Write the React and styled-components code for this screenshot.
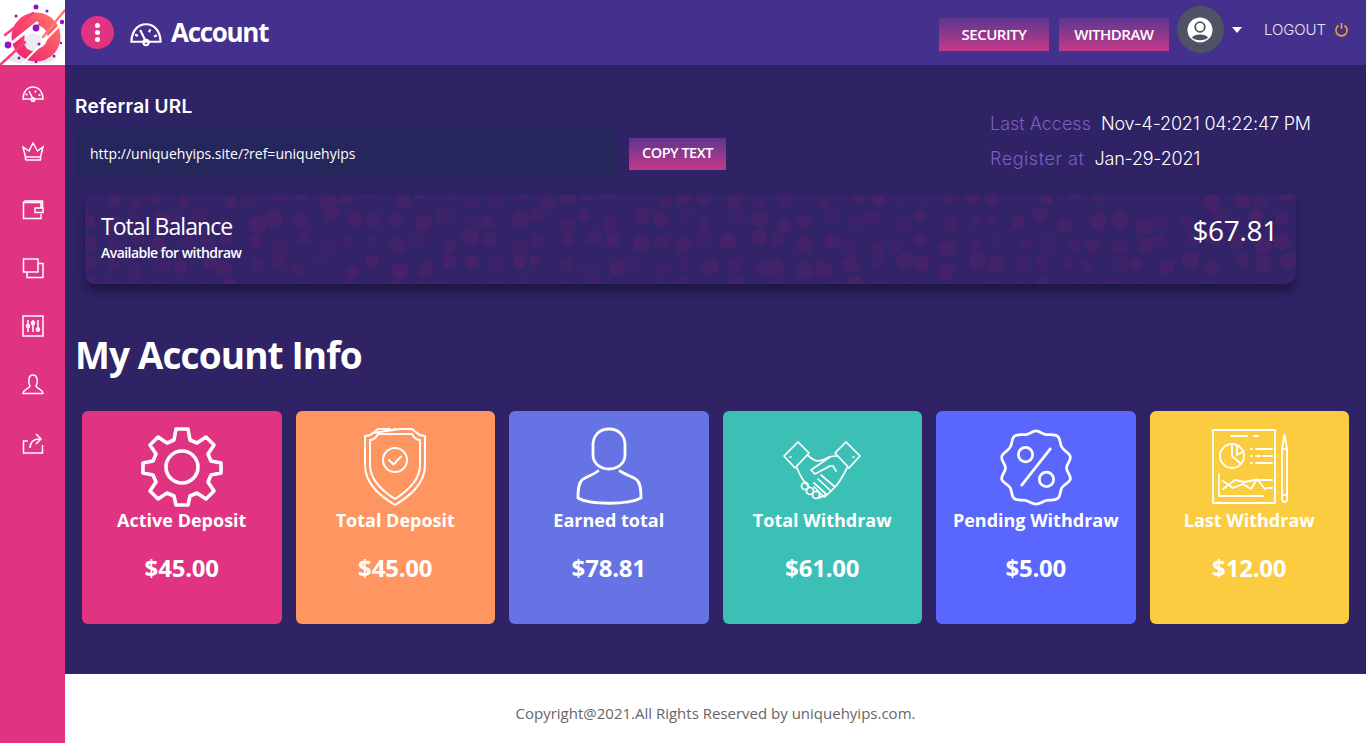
import React from 'react';
import styled, { createGlobalStyle } from 'styled-components';

const GlobalStyle = createGlobalStyle`
  html, body { margin: 0; padding: 0; background: #2f2366; }
  * { box-sizing: border-box; }
`;

const Page = styled.div`
  display: flex;
  width: 1366px;
  height: 743px;
  overflow: hidden;
  font-family: "Open Sans", sans-serif;
`;

const Sidebar = styled.aside`
  flex: 0 0 65px;
  display: flex;
  flex-direction: column;
  background: #e03382;
`;

const LogoBox = styled.div`
  height: 65px;
  background: #fff;
`;

const SideNav = styled.nav`
  display: flex;
  flex-direction: column;
  align-items: center;
  padding-top: 17px;
  gap: 36.3px;
`;

const SideIcon = styled.svg`
  width: 22px;
  height: 22px;
  fill: none;
  stroke: #fff;
  stroke-width: 1.5;
  display: block;
`;

const Content = styled.div`
  flex: 1;
  display: flex;
  flex-direction: column;
  min-width: 0;
`;

const Header = styled.header`
  height: 65px;
  display: flex;
  align-items: center;
  padding: 0 16px;
  background: #44318d;
`;

const MenuButton = styled.div`
  width: 33px;
  height: 33px;
  border-radius: 50%;
  background: #e03382;
  display: flex;
  flex-direction: column;
  align-items: center;
  justify-content: center;
  gap: 2px;
  margin-right: 16px;
  span {
    width: 5px;
    height: 5px;
    border-radius: 50%;
    background: #fff;
  }
`;

const PageTitle = styled.h1`
  margin: -2px 0 0 9px;
  color: #fff;
  font-size: 26px;
  font-weight: 700;
  letter-spacing: -1.3px;
`;

const HeaderRight = styled.div`
  margin-left: auto;
  display: flex;
  align-items: center;
`;

const GradientButton = styled.button`
  border: 0;
  padding: 0 0 ${(p) => p.$pb || 1}px;
  width: ${(p) => p.$w}px;
  height: ${(p) => p.$h}px;
  margin-left: ${(p) => p.$ml || 0}px;
  margin-top: ${(p) => p.$mt || 0}px;
  background: linear-gradient(180deg, #5f3590 0%, #c43a88 100%);
  color: #fff;
  font-family: "Open Sans", sans-serif;
  font-size: ${(p) => p.$size || 15}px;
  font-weight: 600;
  letter-spacing: -0.5px;
`;

const Avatar = styled.div`
  width: 47px;
  height: 47px;
  margin-left: 8px;
  margin-top: -6px;
  border-radius: 50%;
  background: #4f5262;
  display: flex;
  align-items: center;
  justify-content: center;
`;

const Caret = styled.div`
  width: 0;
  height: 0;
  margin: -6px 0 0 8px;
  border-left: 5.5px solid transparent;
  border-right: 5.5px solid transparent;
  border-top: 6px solid #fff;
`;

const Logout = styled.div`
  display: flex;
  align-items: center;
  margin: -7px 1px 0 22px;
  color: #e9e6f5;
  font-family: "Inter", sans-serif;
  font-size: 15px;
  font-weight: 300;
  letter-spacing: -0.08px;
  svg { margin-left: 8px; }
`;

const Main = styled.main`
  flex: 1;
  background: #2f2366;
  padding: 29px 17px 0 10px;
`;

const TopRow = styled.div`
  display: flex;
  justify-content: space-between;
`;

const ReferralLabel = styled.div`
  color: #fff;
  font-family: "Inter", sans-serif;
  font-size: 19px;
  font-weight: 600;
  line-height: 26px;
  height: 35px;
  letter-spacing: 0.25px;
`;

const ReferralRow = styled.div`
  display: flex;
  align-items: center;
`;

const UrlBox = styled.div`
  width: 543px;
  height: 48px;
  display: flex;
  align-items: center;
  padding-left: 15px;
  background: #25265c;
  color: #fff;
  font-size: 14px;
`;

const AccessList = styled.div`
  width: 359px;
  padding-top: 16px;
  display: flex;
  flex-direction: column;
  gap: 7px;
`;

const AccessLine = styled.div`
  display: flex;
  height: 28px;
  line-height: 28px;
  font-family: "Inter", sans-serif;
  font-size: 18px;
  font-weight: 300;
`;

const AccessKey = styled.span`
  color: #7a5fc4;
  margin-right: 10px;
  letter-spacing: ${(p) => p.$track || 0}px;
`;

const AccessValue = styled.span`
  color: #fff;
  letter-spacing: -0.2px;
`;

const Balance = styled.section`
  position: relative;
  overflow: hidden;
  width: 1211px;
  height: 89px;
  margin: 18px 0 0 10px;
  padding: 17px 18px 0 16px;
  display: flex;
  justify-content: space-between;
  background: #33246a;
  border-radius: 0 0 10px 10px;
  box-shadow: 0 8px 8px rgba(28, 21, 62, 0.85);
`;

const DotField = styled.svg`
  position: absolute;
  inset: 0;
  width: 100%;
  height: 100%;
`;

const BalanceText = styled.div`
  position: relative;
  color: #fff;
`;

const BalanceTitle = styled.div`
  font-size: 23px;
  line-height: 28px;
  letter-spacing: -0.95px;
`;

const BalanceSub = styled.div`
  font-size: 14px;
  line-height: 20px;
  margin-top: 3px;
  font-weight: 600;
  letter-spacing: -0.55px;
`;

const BalanceAmount = styled.div`
  position: relative;
  color: #fff;
  font-size: 28px;
  line-height: 36px;
  letter-spacing: -0.3px;
`;

const SectionTitle = styled.h2`
  margin: 42px 0 0;
  height: 85px;
  color: #fff;
  font-size: 37px;
  line-height: 58px;
  font-weight: 700;
  letter-spacing: -0.9px;
`;

const CardGrid = styled.div`
  display: grid;
  grid-template-columns: repeat(6, 1fr);
  gap: 14px;
  margin-left: 7px;
`;

const Card = styled.div`
  height: 213px;
  display: flex;
  flex-direction: column;
  align-items: center;
  padding-top: 16px;
  border-radius: 6px;
  background: ${(p) => p.$bg};
  color: #fff;
`;

const CardIcon = styled.svg`
  width: 82px;
  height: 80px;
  fill: none;
  stroke: #fff;
  stroke-width: ${(p) => p.$sw || 2.6};
  stroke-linecap: round;
  stroke-linejoin: round;
`;

const CardLabel = styled.div`
  font-size: 18px;
  line-height: 26px;
  font-weight: 700;
`;

const CardValue = styled.div`
  margin-top: 18px;
  font-size: 24px;
  line-height: 34px;
  font-weight: 700;
  letter-spacing: -0.2px;
`;

const Footer = styled.footer`
  height: 69px;
  display: flex;
  align-items: center;
  justify-content: center;
  padding-top: 8px;
  background: #fff;
  color: #666;
  font-size: 15px;
`;

const Logo = () => (
  <svg width="65" height="65" viewBox="0 0 65 65">
    <defs>
      <linearGradient id="ring" x1="0" y1="1" x2="1" y2="0">
        <stop offset="0" stopColor="#f0246f" />
        <stop offset="1" stopColor="#ff6f6a" />
      </linearGradient>
    </defs>
    <ellipse cx="32" cy="58" rx="24" ry="6" fill="#e8e8ee" />
    <circle cx="36" cy="37" r="18" fill="none" stroke="url(#ring)" strokeWidth="13" />
    <circle cx="33" cy="42" r="9" fill="#ebebf0" />
    <g stroke="#fff" strokeLinecap="round">
      <path d="M13 42 L37 23" strokeWidth="3" />
      <path d="M23 63 L65 20" strokeWidth="2" />
    </g>
    <g strokeLinecap="round" strokeWidth="2.5">
      <path d="M5 35 L33 13" stroke="#fb3d7b" />
      <path d="M0 65 L25 42" stroke="#fb3d7b" />
      <path d="M43 37 L65 10" stroke="#ff7a6c" />
    </g>
    <g fill="#8f14c4">
      <circle cx="36" cy="7" r="2.5" />
      <circle cx="47" cy="11" r="1.5" />
      <circle cx="16" cy="16" r="1.5" />
      <circle cx="62" cy="22" r="2.2" />
      <circle cx="36" cy="28" r="3.4" />
      <circle cx="8" cy="45" r="3.4" />
      <circle cx="39" cy="44" r="1.5" />
      <circle cx="19" cy="58" r="1.5" />
      <circle cx="61" cy="43" r="1.2" />
      <circle cx="54" cy="56" r="1.5" />
      <circle cx="36" cy="62" r="1.3" />
    </g>
  </svg>
);

const Gauge = ({ size = 22 }) => (
  <SideIcon viewBox="0 0 22 22" style={{ width: size, height: size }}>
    <path d="M1 17 C1 10 5 5 11 5 C17 5 21 10 21 17 Z" />
    <path d="M7 9 L10.5 16" />
    <circle cx="11" cy="17.5" r="1.8" />
    <path d="M3.5 12 L5.5 13 M14 8.5 L13 10.5 M18.5 12.5 L16.5 13.5" />
  </SideIcon>
);

const Crown = () => (
  <SideIcon viewBox="0 0 22 22">
    <path d="M3.5 20 H19 M3.5 17 H18.5 V20 M3.5 17 V20 M3.5 17 L1 7 L7 11 L11 3 L15.5 11 L21 7 L18.5 17" />
  </SideIcon>
);

const Wallet = () => (
  <SideIcon viewBox="0 0 22 22">
    <path d="M19 9 V3.5 H1.5 V19.5 H19 V15" />
    <path d="M1.5 3.5 L3 2 H20.5 V9" />
    <path d="M13 9 H21 V13.5 H13 Z" />
  </SideIcon>
);

const Screens = () => (
  <SideIcon viewBox="0 0 22 22">
    <path d="M1.5 2 H16 V15 H1.5 Z" />
    <path d="M16 6.5 H21 V20.5 H5 V15" />
  </SideIcon>
);

const Sliders = () => (
  <SideIcon viewBox="0 0 22 22">
    <path d="M1 1 H21 V21 H1 Z" />
    <path d="M6 5 V17 M11 5 V17 M16 5 V17" />
    <circle cx="6" cy="11" r="1.6" />
    <circle cx="11" cy="8" r="1.6" />
    <circle cx="16" cy="14.5" r="1.6" />
  </SideIcon>
);

const Person = () => (
  <SideIcon viewBox="0 0 22 22">
    <path d="M8 13 C6 10 6 2 11 2 C16 2 16 10 14 13 C14 15 21 17 21 20.5 H1 C1 17 8 15 8 13 Z" />
  </SideIcon>
);

const Share = () => (
  <SideIcon viewBox="0 0 22 22">
    <path d="M6 9 H1.5 V21 H20.5 V13" />
    <path d="M8 16 C8 10 11 7 18 7 M14 2 L19 7 L14 12" />
  </SideIcon>
);

const UserBadge = () => (
  <svg width="26" height="26" viewBox="0 0 26 26">
    <circle cx="13" cy="13" r="12.5" fill="#fff" />
    <circle cx="13" cy="10" r="4.8" fill="none" stroke="#4f5262" strokeWidth="1.8" />
    <path d="M5 20.5 C7 16.5 19 16.5 21 20.5 C18 24 8 24 5 20.5 Z" fill="#4f5262" />
  </svg>
);

const PowerIcon = () => (
  <svg width="15" height="15" viewBox="0 0 15 15" fill="none" stroke="#e3a72f" strokeWidth="1.6">
    <path d="M4.5 3.5 A5.6 5.6 0 1 0 10.5 3.5" />
    <path d="M7.5 1 V7" />
  </svg>
);

// fixed pseudo random, the dots are only a texture
const dots = [];
let seed = 7;
const rnd = () => {
  seed = (seed * 16807) % 2147483647;
  return seed / 2147483647;
};
for (let x = -6; x < 1215; x += 24) {
  for (let y = -4; y < 95; y += 23) {
    dots.push({
      x: x + rnd() * 12,
      y: y + rnd() * 12,
      r: 6 + rnd() * 3,
      o: 0.35 + rnd() * 0.5,
    });
  }
}

const Gear = () => (
  <CardIcon viewBox="0 0 82 80" $sw={3.6}>
    <path d="M35 2 H47 L49 13 L56 16 L65 10 L73 18 L67 27 L70 34 L80 36 V46 L70 48 L67 55 L73 64 L65 72 L56 66 L49 69 L47 78 H35 L33 69 L26 66 L17 72 L9 64 L15 55 L12 48 L2 46 V36 L12 34 L15 27 L9 18 L17 10 L26 16 L33 13 Z" />
    <circle cx="41" cy="40" r="16" />
  </CardIcon>
);

const Shield = () => (
  <CardIcon viewBox="0 0 82 80" $sw={2}>
    <path d="M19 6 L24 2 H36 M46 2 H58 L63 6 C66 9 69 9 71 9 V38 C71 58 54 70 41 78 C28 70 11 58 11 38 V9 C13 9 16 9 19 6 Z" />
    <path d="M24 7 H36 M46 7 H58 C60 11 63 13 66 13 V38 C66 54 52 65 41 72 C30 65 16 54 16 38 V13 C19 13 22 11 24 7 Z" />
    <circle cx="41" cy="33" r="12" />
    <path d="M35 33 L39.5 37.5 L47 29.5" />
    <path d="M40 2 H42" />
  </CardIcon>
);

const Bust = () => (
  <CardIcon viewBox="0 0 82 80" $sw={2.8}>
    <path d="M41 2 C31 2 25 9 25 18 V28 C25 36 32 42 41 42 C50 42 57 36 57 28 V18 C57 9 51 2 41 2 Z" />
    <path d="M30 44 C25 48 17 50 14 53 C11 56 10 60 10 71 C22 78 60 78 73 71 C73 60 72 56 69 53 C66 50 58 48 52 44" />
  </CardIcon>
);

const Handshake = () => (
  <CardIcon viewBox="0 -11 82 80" $sw={1.7}>
    <path d="M3 18 L17 4 L28 15 L14 30 Z" />
    <path d="M54 15 L65 4 L79 18 L68 30 Z" />
    <path d="M9 19 H10 M72 19 H73" />
    <path d="M26 17 L33 22 C38 24 42 22 48 19 C51 18 53 18 56 18" />
    <path d="M16 30 C19 38 23 44 28 49" />
    <path d="M66 30 C62 38 58 45 54 49 L47 56 L43 59 L33 49" />
    <path d="M49 19 L30 32 L34 36 L49 28 H52 L55 33" />
    <path d="M40 37 L54 49 M37 41 L50 53 M33 45 L45 56" />
    <circle cx="24" cy="48" r="3.5" />
    <circle cx="29" cy="53" r="3.5" />
    <circle cx="35" cy="57" r="3.5" />
    <path d="M38 60 L44 57" />
  </CardIcon>
);

const Percent = () => (
  <CardIcon viewBox="-2 -2 86 84" $sw={2.9}>
    <path d="M41 2 C45 2 48 6 52 6 C56 6 61 5 64 8 C67 11 66 16 68 19 C70 23 76 25 77 29 C78 33 73 37 73 41 C73 45 78 49 77 53 C76 57 70 58 68 62 C66 66 67 70 64 73 C60 76 56 74 52 75 C48 76 45 79 41 79 C37 79 34 76 30 75 C26 74 22 76 18 73 C15 70 16 66 14 62 C12 58 6 57 5 53 C4 49 9 45 9 41 C9 37 4 33 5 29 C6 25 12 23 14 19 C16 16 15 11 18 8 C21 5 26 6 30 6 C34 6 37 2 41 2 Z" />
    <circle cx="30" cy="27" r="7.5" />
    <circle cx="52" cy="53" r="7.5" />
    <path d="M56 21 L26 59" />
  </CardIcon>
);

const Report = () => (
  <CardIcon viewBox="0 0 82 80" $sw={1.8}>
    <g transform="translate(2 0)">
      <path d="M3 3 H65 V76 H3 Z" />
      <path d="M21 9 H37 M44 9 H48" />
      <circle cx="22" cy="29" r="12" />
      <path d="M22 17 V29 L31 37 M27 18 L27 28 L34 24" />
      <path d="M41 22 H42 M46 22 H62 M41 29 H42 M46 29 H50 M53 29 H62 M41 36 H42 M46 36 H62" />
      <path d="M9 47 V69 H53" />
      <path d="M13 54 L23 61 L33 57 L41 62 L47 52 L55 62 M13 62 L25 53 L34 55 L45 53 L55 53" />
      <path d="M55 53 H62 M57 61 H62" />
    </g>
    <path d="M74 22 L76.5 8 L79 22 V72 C79 76 74 76 74 72 Z M74 22 H79 M74 68 H79" />
  </CardIcon>
);

const cards = [
  { label: 'Active Deposit', value: '$45.00', bg: '#e03382', Icon: Gear },
  { label: 'Total Deposit', value: '$45.00', bg: '#ff9662', Icon: Shield },
  { label: 'Earned total', value: '$78.81', bg: '#6673e5', Icon: Bust },
  { label: 'Total Withdraw', value: '$61.00', bg: '#3cc0b5', Icon: Handshake },
  { label: 'Pending Withdraw', value: '$5.00', bg: '#5a67ff', Icon: Percent },
  { label: 'Last Withdraw', value: '$12.00', bg: '#fbcc40', Icon: Report },
];

const App = () => {
  return (
    <Page>
      <GlobalStyle />
      <Sidebar>
        <LogoBox><Logo /></LogoBox>
        <SideNav>
          <Gauge />
          <Crown />
          <Wallet />
          <Screens />
          <Sliders />
          <Person />
          <Share />
        </SideNav>
      </Sidebar>
      <Content>
        <Header>
          <MenuButton><span /><span /><span /></MenuButton>
          <Gauge size={32} />
          <PageTitle>Account</PageTitle>
          <HeaderRight>
            <GradientButton $w={110} $h={33} $mt={4}>SECURITY</GradientButton>
            <GradientButton $w={110} $h={33} $mt={4} $ml={10}>WITHDRAW</GradientButton>
            <Avatar><UserBadge /></Avatar>
            <Caret />
            <Logout>LOGOUT<PowerIcon /></Logout>
          </HeaderRight>
        </Header>
        <Main>
          <TopRow>
            <div>
              <ReferralLabel>Referral URL</ReferralLabel>
              <ReferralRow>
                <UrlBox>http://uniquehyips.site/?ref=uniquehyips</UrlBox>
                <GradientButton $w={97} $h={32} $ml={11} $mt={2} $pb={3} $size={14.5}>COPY TEXT</GradientButton>
              </ReferralRow>
            </div>
            <AccessList>
              <AccessLine>
                <AccessKey>Last Access</AccessKey>
                <AccessValue>Nov-4-2021 04:22:47 PM</AccessValue>
              </AccessLine>
              <AccessLine>
                <AccessKey $track={0.55}>Register at</AccessKey>
                <AccessValue>Jan-29-2021</AccessValue>
              </AccessLine>
            </AccessList>
          </TopRow>
          <Balance>
            <DotField viewBox="0 0 1211 89" preserveAspectRatio="none">
              {dots.map((d, i) => (
                <circle key={i} cx={d.x} cy={d.y} r={d.r} fill="#4a2269" opacity={d.o} />
              ))}
            </DotField>
            <BalanceText>
              <BalanceTitle>Total Balance</BalanceTitle>
              <BalanceSub>Available for withdraw</BalanceSub>
            </BalanceText>
            <BalanceAmount>$67.81</BalanceAmount>
          </Balance>
          <SectionTitle>My Account Info</SectionTitle>
          <CardGrid>
            {cards.map(({ label, value, bg, Icon }) => (
              <Card key={label} $bg={bg}>
                <Icon />
                <CardLabel>{label}</CardLabel>
                <CardValue>{value}</CardValue>
              </Card>
            ))}
          </CardGrid>
        </Main>
        <Footer>Copyright@2021.All Rights Reserved by uniquehyips.com.</Footer>
      </Content>
    </Page>
  );
};

export default App;
